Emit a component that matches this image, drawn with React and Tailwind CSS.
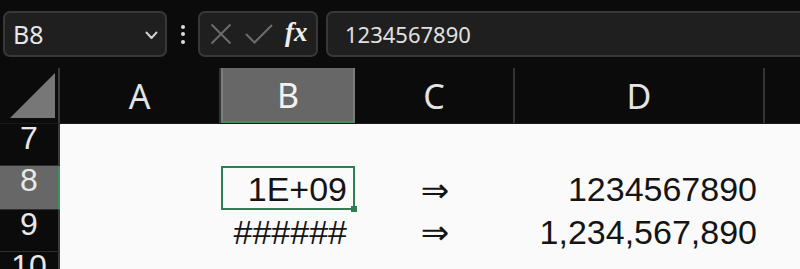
import React from 'react';

const cellFont = { fontFamily: '"Liberation Sans", Arial, sans-serif' };
const uiFont = { fontFamily: '"Noto Sans", "Open Sans", sans-serif' };

const columns = [
  { name: 'A', w: 'w-[161px]', active: false },
  { name: 'B', w: 'w-[134px]', active: true },
  { name: 'C', w: 'w-[160px]', active: false },
  { name: 'D', w: 'w-[250px]', active: false },
];

function Toolbar() {
  return (
    <div className="h-[62px] flex items-start pt-[11px] shrink-0">
      {/* name box */}
      <div className="ml-[3px] w-[164px] shrink-0 h-[46px] rounded-[7px] border-2 border-[#383838] bg-[#1f1f1f] flex items-center justify-between pl-[8px] pr-[7px]">
        <span className="text-[25px] leading-none text-[#e6e6e6]" style={uiFont}>B8</span>
        <svg width="13" height="9" viewBox="0 0 13 9" className="mt-[2px]">
          <polyline points="1.5,1.5 6.5,7 11.5,1.5" fill="none" stroke="#d0d0d0" strokeWidth="2" strokeLinecap="round" strokeLinejoin="round" />
        </svg>
      </div>

      {/* vertical ellipsis */}
      <div className="w-[31px] shrink-0 h-[46px] flex flex-col items-center justify-center gap-[3.5px]">
        <span className="w-[4px] h-[4px] rounded-full bg-[#dcdcdc]" />
        <span className="w-[4px] h-[4px] rounded-full bg-[#dcdcdc]" />
        <span className="w-[4px] h-[4px] rounded-full bg-[#dcdcdc]" />
      </div>

      {/* cancel / enter / fx */}
      <div className="w-[120px] shrink-0 h-[46px] rounded-[7px] border-2 border-[#383838] bg-[#1f1f1f] flex items-center pl-[10px]">
        <svg width="22" height="22" viewBox="0 0 22 22">
          <path d="M1.5 1.5 L20.5 20.5 M20.5 1.5 L1.5 20.5" stroke="#6c6c6c" strokeWidth="2" fill="none" />
        </svg>
        <svg width="28" height="20" viewBox="0 0 28 20" className="ml-[13px]">
          <polyline points="1,10 9.5,18.5 27,1" stroke="#6c6c6c" strokeWidth="2" fill="none" />
        </svg>
        <span
          className="ml-[12px] text-[27px] leading-none italic font-bold text-[#eeeeee] -mt-[3px]"
          style={{ fontFamily: '"Liberation Serif", "Times New Roman", serif' }}
        >
          fx
        </span>
      </div>

      {/* formula bar */}
      <div className="ml-[8px] w-[500px] shrink-0 h-[46px] rounded-[7px] border-2 border-[#383838] bg-[#1f1f1f] flex items-center pl-[17px]">
        <span className="text-[22px] leading-none text-[#e0e0e0]" style={uiFont}>1234567890</span>
      </div>
    </div>
  );
}

function HeaderRow() {
  return (
    <div className="h-[61px] flex items-end shrink-0">
      <div className="w-[60px] shrink-0 h-[55px] border-r-2 border-[#3a3a3a] flex items-end">
        <svg width="58" height="55" viewBox="0 0 58 55">
          <polygon points="55,5 55,50 10,50" fill="#777777" />
        </svg>
      </div>
      {columns.map((c) =>
        c.active ? (
          <div
            key={c.name}
            className={`${c.w} shrink-0 h-[55px] bg-[#676767] border-x-2 border-[#7c7c7c] border-b-2 border-b-[#3f8f5f] flex items-center justify-center`}
          >
            <span className="text-[34px] leading-none text-[#f2f2f2]" style={uiFont}>{c.name}</span>
          </div>
        ) : (
          <div
            key={c.name}
            className={`${c.w} shrink-0 h-[55px] border-r-2 border-[#333333] flex items-center justify-center`}
          >
            <span className="text-[34px] leading-none text-[#e4e4e4]" style={uiFont}>{c.name}</span>
          </div>
        )
      )}
      <div className="flex-1 h-[55px]" />
    </div>
  );
}

const rows = [
  { n: 7, h: 'h-[42px]', b: '', c: '', d: '' },
  { n: 8, h: 'h-[44px]', b: '1E+09', c: '⇒', d: '1234567890', active: true },
  { n: 9, h: 'h-[42px]', b: '######', c: '⇒', d: '1,234,567,890' },
  { n: 10, h: 'h-[42px]', b: '', c: '', d: '' },
];

function Sheet() {
  return (
    <div className="flex flex-1 border-t border-[#1a1a1a]">
      {/* row numbers */}
      <div className="w-[60px] shrink-0 flex flex-col">
        {rows.map((r) => (
          <div
            key={r.n}
            className={`${r.h} shrink-0 flex justify-center border-b border-[#2e2e2e] ${
              r.active ? 'bg-[#676767] border-r-2 border-r-[#3f8f5f]' : 'border-r-2 border-r-[#3a3a3a]'
            }`}
          >
            <span className="text-[32px] leading-[28px] text-[#e8e8e8]" style={cellFont}>{r.n}</span>
          </div>
        ))}
      </div>

      {/* cells */}
      <div className="flex-1 bg-[#fafafa] flex flex-col">
        {rows.map((r) => (
          <div key={r.n} className={`${r.h} shrink-0 flex text-[34px] leading-none text-[#141414]`} style={cellFont}>
            <div className="w-[161px] shrink-0" />
            {r.active ? (
              <div className="relative w-[134px] shrink-0 border-2 border-[#2f7d52] flex items-end justify-end pr-[6px] pb-[2px]">
                {r.b}
                <span className="absolute -right-[4px] -bottom-[4px] w-[6px] h-[6px] bg-[#2f7d52]" />
              </div>
            ) : (
              <div className="w-[134px] shrink-0 flex items-end justify-end pr-[8px] pb-[3px]">{r.b}</div>
            )}
            <div className="w-[160px] shrink-0 flex items-end justify-center pb-[3px]">
              <span style={{ fontFamily: '"DejaVu Sans", sans-serif' }}>{r.c}</span>
            </div>
            <div className={`w-[250px] shrink-0 flex items-end justify-end pr-[8px] ${r.active ? 'pb-[4px]' : 'pb-[3px]'}`}>
              {r.d}
            </div>
            <div className="flex-1" />
          </div>
        ))}
      </div>
    </div>
  );
}

export default function App() {
  return (
    <div className="w-[800px] h-[269px] overflow-hidden bg-[#0b0b0b] flex flex-col">
      <Toolbar />
      <HeaderRow />
      <Sheet />
    </div>
  );
}
